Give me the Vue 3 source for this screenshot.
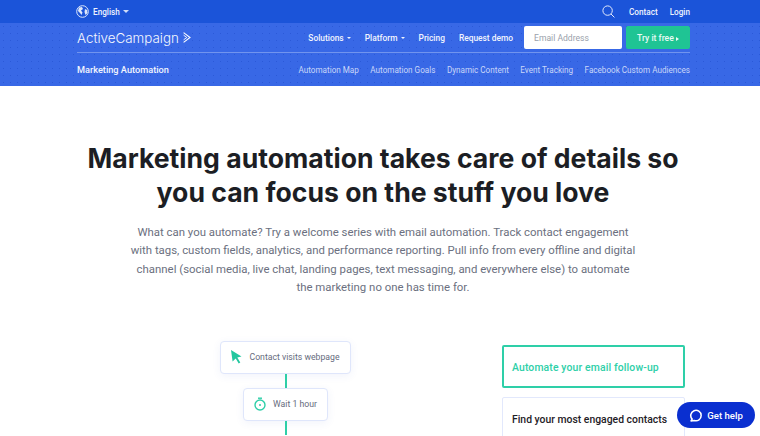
<template>
  <div class="page">
    <div class="topbar">
      <div class="wrap topbar-in">
        <div class="lang">
          <svg class="globe" width="13" height="13" viewBox="0 0 13 13">
            <circle cx="6.5" cy="6.5" r="5.8" fill="none" stroke="#dfe8fb" stroke-width="1" />
            <path d="M3 2.5 6 2 7 4 5 5.5 6.5 7.5 5.5 10 4 8 2 6Z M9 4l2 1 .5 3-2 2-1-3Z" fill="#dfe8fb" />
          </svg>
          <span>English</span>
          <i class="caret"></i>
        </div>
        <div class="top-right">
          <svg width="13" height="13" viewBox="0 0 13 13" fill="none" stroke="#e4ebfc" stroke-width="1">
            <circle cx="5.6" cy="5.6" r="4.7" />
            <path d="M9 9l3.4 3.4" />
          </svg>
          <a class="contact">Contact</a>
          <a>Login</a>
        </div>
      </div>
    </div>

    <header class="hero-nav">
      <div class="wrap">
        <div class="mainrow">
          <div class="logo">
            <span>ActiveCampaign</span>
            <svg width="8" height="11" viewBox="0 0 8 11" fill="none" stroke="#fff" stroke-width="1.1">
              <path d="M.6.6l6.4 4.9-6.4 4.9" />
              <path d="M.6 3.2l3.2 2.3-3.2 2.3" stroke-width=".9" />
            </svg>
          </div>
          <nav class="mainnav">
            <a>Solutions <i class="caret small"></i></a>
            <a>Platform <i class="caret small"></i></a>
            <a>Pricing</a>
            <a>Request demo</a>
          </nav>
          <div class="signup">
            <input class="email" placeholder="Email Address" />
            <button class="try">Try it free <i class="arrow"></i></button>
          </div>
        </div>
        <div class="subrow">
          <strong>Marketing Automation</strong>
          <div class="sublinks">
            <a v-for="link in subLinks" :key="link">{{ link }}</a>
          </div>
        </div>
      </div>
    </header>

    <main class="content">
      <h1>Marketing automation takes care of details so<br />you can focus on the stuff you love</h1>
      <p class="lead">
        What can you automate? Try a welcome series with email automation. Track contact engagement<br />
        with tags, custom fields, analytics, and performance reporting. Pull info from every offline and digital<br />
        channel (social media, live chat, landing pages, text messaging, and everywhere else) to automate<br />
        the marketing no one has time for.
      </p>

      <div class="demo">
        <div class="flow">
          <div class="node">
            <svg width="11" height="14" viewBox="0 0 11 14"><path d="M0 0l10.5 6.6-4.2 1 3 5-1.6 1-3-5L1.6 11.6Z" fill="#23c79f" /></svg>
            <span>Contact visits webpage</span>
          </div>
          <div class="line"></div>
          <div class="node">
            <svg width="12" height="14" viewBox="0 0 12 14" fill="none" stroke="#2ecfa8" stroke-width="1.4">
              <circle cx="6" cy="8" r="5" />
              <circle cx="6" cy="8" r="1" fill="#2ecfa8" stroke="none" />
              <path d="M4 1.2h4" />
            </svg>
            <span>Wait 1 hour</span>
          </div>
          <div class="line"></div>
        </div>
        <div class="tabs">
          <div class="tab active">Automate your email follow-up</div>
          <div class="tab">Find your most engaged contacts</div>
        </div>
      </div>
    </main>

    <button class="help">
      <svg width="13" height="13" viewBox="0 0 15 15" fill="none" stroke="#fff" stroke-width="1.8">
        <path d="M3.6 11.6A6 6 0 1 1 6 13.2L2.4 13.8Z" stroke-linejoin="round" />
      </svg>
      Get help
    </button>
  </div>
</template>

<script setup>
const subLinks = [
  'Automation Map',
  'Automation Goals',
  'Dynamic Content',
  'Event Tracking',
  'Facebook Custom Audiences',
]
</script>

<style>
html,
body {
  margin: 0;
  overflow: hidden;
}
</style>

<style scoped>
.page {
  position: relative;
  width: 760px;
  height: 436px;
  overflow: hidden;
  background: #fff;
  font-family: "Roboto", "Noto Sans", sans-serif;
  color: #1e2026;
}
.wrap {
  width: 613px;
  margin-left: 77px;
}
.topbar {
  height: 23px;
  background: #1b54d9;
  color: #eef3fe;
  font-size: 8.2px;
  font-weight: 500;
}
.topbar-in {
  height: 23px;
  display: flex;
  justify-content: space-between;
  align-items: center;
}
.lang {
  display: flex;
  align-items: center;
  gap: 3px;
  margin-left: -1px;
}
.lang span {
  margin-left: 1px;
}
.caret {
  display: inline-block;
  width: 0;
  height: 0;
  border: 3px solid transparent;
  border-top: 3px solid #cfdcf8;
  border-bottom: 0;
}
.caret.small {
  border-width: 2.5px 2.5px 0;
  border-top-color: #eef3fe;
  margin-left: 1px;
  vertical-align: middle;
}
.top-right {
  display: flex;
  align-items: center;
}
.contact {
  margin: 0 12px 0 14px;
}
.hero-nav {
  height: 63px;
  background-color: #3868e6;
  background-image: radial-gradient(circle, rgba(20, 60, 190, 0.35) 0.5px, transparent 0.8px);
  background-size: 7px 7px;
  color: #fff;
}
.mainrow {
  height: 27px;
  padding: 1px 0;
  display: flex;
  align-items: center;
  border-bottom: 1px solid #7194ee;
}
.logo {
  display: flex;
  align-items: center;
  gap: 4px;
  font-family: "Inter", sans-serif;
  font-size: 13.4px;
  font-weight: 300;
  color: #f4f7fe;
}
.mainnav {
  margin-left: auto;
  display: flex;
  gap: 14px;
  font-size: 8.4px;
  font-weight: 500;
  color: #f2f5fe;
}
.signup {
  display: flex;
  gap: 4px;
  margin-left: 11px;
}
.email {
  width: 98px;
  height: 23px;
  box-sizing: border-box;
  border: 0;
  border-radius: 2px;
  padding: 0 10px;
  background: #fff;
  font: 8.6px "Roboto", sans-serif;
}
.email::placeholder {
  color: #9a9fab;
}
.try {
  width: 64px;
  height: 23px;
  border: 0;
  border-radius: 2px;
  padding: 0;
  background: #1fc494;
  color: #e9fbf5;
  font: 500 8.6px "Roboto", sans-serif;
}
.arrow {
  display: inline-block;
  border-left: 3px solid #e9fbf5;
  border-top: 2.5px solid transparent;
  border-bottom: 2.5px solid transparent;
}
.subrow {
  height: 33px;
  display: flex;
  align-items: center;
  justify-content: space-between;
  font-size: 9.2px;
}
.subrow strong {
  font-weight: 500;
  color: #f2f5fe;
}
.sublinks {
  display: flex;
  gap: 11.5px;
  font-size: 8.15px;
  color: #c9d7f9;
}
.content {
  padding: 55px 0 0 6px;
}
h1 {
  margin: 0;
  text-align: center;
  font-family: "Inter", sans-serif;
  font-size: 26.6px;
  line-height: 34px;
  font-weight: 700;
  color: #1c1e24;
}
.lead {
  margin: 14px 0 0;
  text-align: center;
  font-size: 11.4px;
  line-height: 18.4px;
  color: #6b7080;
}
.demo {
  display: flex;
  margin-top: 44px;
  padding-left: 214px;
}
.flow {
  width: 131px;
  display: flex;
  flex-direction: column;
  align-items: center;
}
.node {
  display: flex;
  align-items: center;
  gap: 7px;
  height: 31px;
  padding: 0 10px;
  border: 1px solid #dfe6fb;
  border-radius: 4px;
  background: #fff;
  box-shadow: 0 2px 8px rgba(60, 90, 200, 0.07);
  font-size: 8.7px;
  color: #666b7d;
  white-space: nowrap;
}
.line {
  width: 2px;
  height: 14px;
  background: #2ecfa8;
}
.tabs {
  margin: 4px 0 0 151px;
  width: 183px;
  display: flex;
  flex-direction: column;
  gap: 9px;
}
.tab {
  height: 43px;
  box-sizing: border-box;
  flex: none;
  display: flex;
  align-items: center;
  padding: 2px 0 0 9px;
  border: 1px solid #e2e8fc;
  border-radius: 2px;
  font-size: 10.4px;
  font-weight: 500;
  color: #1e2026;
}
.tab.active {
  padding-left: 8px;
  border: 2px solid #2ecfa8;
  color: #2ecfa8;
  letter-spacing: 0.14px;
}
.help {
  position: absolute;
  left: 677px;
  top: 402px;
  width: 78px;
  height: 26px;
  border: 0;
  border-radius: 13px;
  background: #0a2fd0;
  color: #fff;
  font: 500 9.6px "Roboto", sans-serif;
  display: flex;
  align-items: center;
  justify-content: center;
  gap: 5px;
  padding: 0;
}
</style>
